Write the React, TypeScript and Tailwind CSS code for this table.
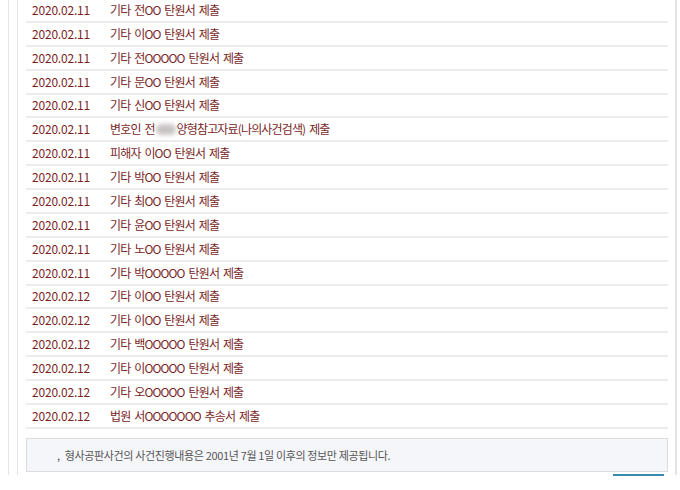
import React from "react";

const rows: { date: string; title: React.ReactNode }[] = [
  { date: "2020.02.11", title: "기타 전OO 탄원서 제출" },
  { date: "2020.02.11", title: "기타 이OO 탄원서 제출" },
  { date: "2020.02.11", title: "기타 전OOOOO 탄원서 제출" },
  { date: "2020.02.11", title: "기타 문OO 탄원서 제출" },
  { date: "2020.02.11", title: "기타 신OO 탄원서 제출" },
  {
    date: "2020.02.11",
    title: (
      <>
        변호인 전
        <span className="inline-block w-[20px] h-[11px] align-[-1px] rounded-full bg-[#c9c4c4] blur-[2px] mx-[1px]" />
        양형참고자료(나의사건검색) 제출
      </>
    ),
  },
  { date: "2020.02.11", title: "피해자 이OO 탄원서 제출" },
  { date: "2020.02.11", title: "기타 박OO 탄원서 제출" },
  { date: "2020.02.11", title: "기타 최OO 탄원서 제출" },
  { date: "2020.02.11", title: "기타 윤OO 탄원서 제출" },
  { date: "2020.02.11", title: "기타 노OO 탄원서 제출" },
  { date: "2020.02.11", title: "기타 박OOOOO 탄원서 제출" },
  { date: "2020.02.12", title: "기타 이OO 탄원서 제출" },
  { date: "2020.02.12", title: "기타 이OO 탄원서 제출" },
  { date: "2020.02.12", title: "기타 백OOOOO 탄원서 제출" },
  { date: "2020.02.12", title: "기타 이OOOOO 탄원서 제출" },
  { date: "2020.02.12", title: "기타 오OOOOO 탄원서 제출" },
  { date: "2020.02.12", title: "법원 서OOOOOOO 추송서 제출" },
];

export default function App() {
  return (
    <div
      className="w-[680px] h-[490px] bg-white overflow-hidden flex"
      style={{ fontFamily: '"Noto Sans CJK KR", "Noto Sans", sans-serif' }}
    >
      <div className="ml-[8px] w-[669px] h-[475px] border-l border-r-2 border-[#e4e4e4] flex flex-col">
        <div className="ml-[8px] w-[651px] h-full border-l border-[#e4e4e4] pl-[8px] flex flex-col">
          <div className="-mt-[1px] flex flex-col">
            {rows.map((r, i) => (
              <div
                key={i}
                className="h-[23.88px] border-b-2 border-[#ececec] flex items-center text-[12px] text-[#7a1f1f]"
              >
                <span className="w-[84px] pl-[6px] tracking-[-0.2px]">{r.date}</span>
                <span className="tracking-[-0.85px] [word-spacing:2px]">{r.title}</span>
              </div>
            ))}
          </div>
          <div className="mt-[9px] h-[34px] border border-[#dcdcdc] bg-[#f5f6fa] flex items-center pl-[30px] text-[11px] text-[#555] tracking-[-0.35px]">
            <span className="mr-[5px]">,</span>
            형사공판사건의 사건진행내용은 2001년 7월 1일 이후의 정보만 제공됩니다.
          </div>
        </div>
      </div>
      <div className="absolute left-[613px] top-[474px] w-[51px] h-[2px] bg-[#3a8aac]" />
    </div>
  );
}
